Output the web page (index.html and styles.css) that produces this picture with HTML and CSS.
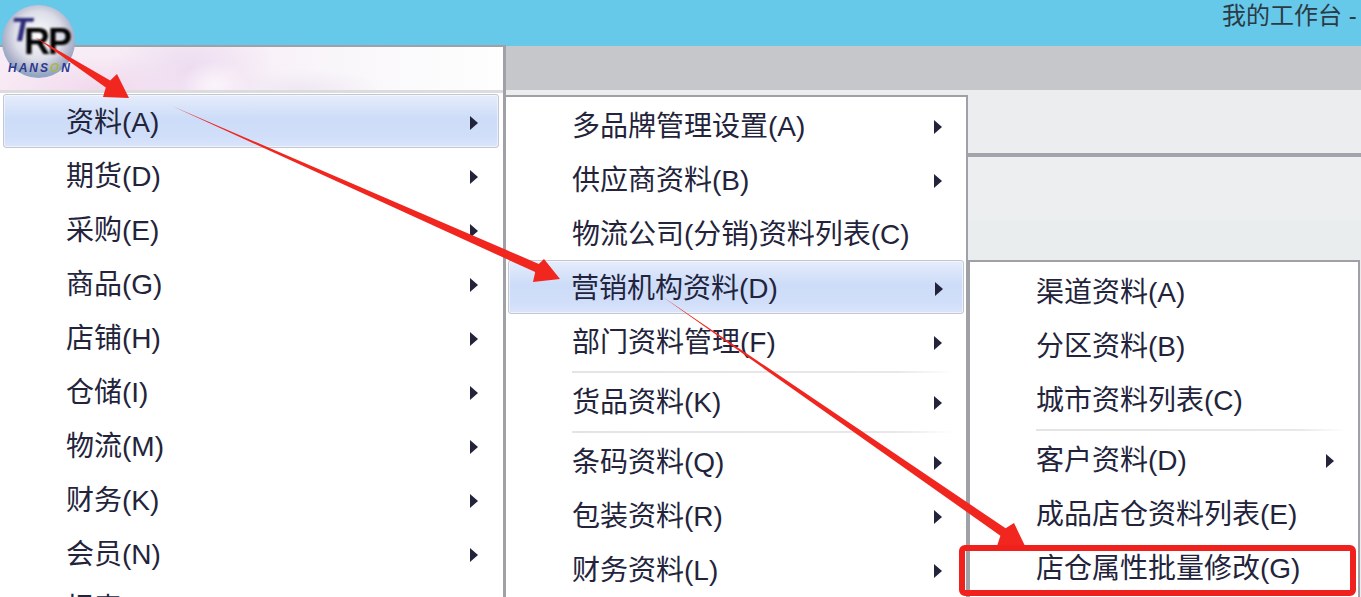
FILE: index.html
```html
<!DOCTYPE html>
<html lang="zh-CN">
<head>
    <meta charset="UTF-8">
    <meta name="viewport" content="width=device-width, initial-scale=1.0">
    <title>我的工作台</title>
    <link rel="stylesheet" href="styles.css">
</head>
<body>
    <div class="window">
        <div class="titlebar">
            <span class="title-text">我的工作台 -</span>
        </div>
        <div class="tabstrip"></div>
        <div class="ribbon"></div>
        <div class="ribbon-line"></div>
        <div class="workarea">
            <div class="workarea-top"></div>
            <div class="workarea-band"></div>
        </div>
    </div>

    <!-- main menu -->
    <div class="menu menu-main">
        <div class="menu-banner"></div>
        <div class="menu-item active"><span>资料(A)</span><i class="arrow"></i></div>
        <div class="menu-item"><span>期货(D)</span><i class="arrow"></i></div>
        <div class="menu-item"><span>采购(E)</span><i class="arrow"></i></div>
        <div class="menu-item"><span>商品(G)</span><i class="arrow"></i></div>
        <div class="menu-item"><span>店铺(H)</span><i class="arrow"></i></div>
        <div class="menu-item"><span>仓储(I)</span><i class="arrow"></i></div>
        <div class="menu-item"><span>物流(M)</span><i class="arrow"></i></div>
        <div class="menu-item"><span>财务(K)</span><i class="arrow"></i></div>
        <div class="menu-item"><span>会员(N)</span><i class="arrow"></i></div>
        <div class="menu-item"><span>报表(S)</span><i class="arrow"></i></div>
    </div>

    <!-- second level -->
    <div class="menu menu-sub menu-data">
        <div class="menu-item"><span>多品牌管理设置(A)</span><i class="arrow"></i></div>
        <div class="menu-item"><span>供应商资料(B)</span><i class="arrow"></i></div>
        <div class="menu-item"><span>物流公司(分销)资料列表(C)</span></div>
        <div class="menu-item active"><span>营销机构资料(D)</span><i class="arrow"></i></div>
        <div class="menu-item"><span>部门资料管理(F)</span><i class="arrow"></i></div>
        <div class="menu-sep"></div>
        <div class="menu-item"><span>货品资料(K)</span><i class="arrow"></i></div>
        <div class="menu-sep"></div>
        <div class="menu-item"><span>条码资料(Q)</span><i class="arrow"></i></div>
        <div class="menu-item"><span>包装资料(R)</span><i class="arrow"></i></div>
        <div class="menu-item"><span>财务资料(L)</span><i class="arrow"></i></div>
    </div>

    <!-- third level -->
    <div class="menu menu-sub menu-org">
        <div class="menu-item"><span>渠道资料(A)</span></div>
        <div class="menu-item"><span>分区资料(B)</span></div>
        <div class="menu-item"><span>城市资料列表(C)</span></div>
        <div class="menu-sep"></div>
        <div class="menu-item"><span>客户资料(D)</span><i class="arrow"></i></div>
        <div class="menu-item"><span>成品店仓资料列表(E)</span></div>
        <div class="menu-item"><span>店仓属性批量修改(G)</span></div>
    </div>

    <!-- round app button -->
    <svg class="logo" width="78" height="80" viewBox="0 0 78 80">
        <defs>
            <radialGradient id="orb" cx="50%" cy="42%" r="55%">
                <stop offset="0" stop-color="#ffffff"/>
                <stop offset="0.6" stop-color="#dcdde8"/>
                <stop offset="0.88" stop-color="#adb1c8"/>
                <stop offset="1" stop-color="#8fa6c4"/>
            </radialGradient>
            <filter id="soft"><feGaussianBlur stdDeviation="0.8"/></filter>
        </defs>
        <circle cx="38.5" cy="41.5" r="36.5" fill="url(#orb)"/>
        <text class="logo-t" x="11" y="41" filter="url(#soft)">T</text>
        <text class="logo-rp" x="24" y="54" filter="url(#soft)">RP</text>
        <text class="logo-name" x="8" y="72">HANS<tspan fill="#a9b84a">O</tspan>N</text>
    </svg>

    <!-- red markup drawn on top of the screenshot -->
    <svg class="markup" width="1361" height="597" viewBox="0 0 1361 597">
        <polygon points="35,37 110.2,80.6 117,74 129,98 103,97 105.8,87.4"/>
        <polygon points="172,106 538.8,263.9 544,259 560,279 533,282 535.2,272.1"/>
        <polygon points="660,295 1005.6,528.3 1014,523 1026,548 997,546 1000.4,535.7"/>
    </svg>
    <div class="highlight-box"></div>
</body>
</html>
```

FILE: styles.css
```css
* {
    margin: 0;
    padding: 0;
    box-sizing: border-box;
}

html, body {
    width: 1361px;
    height: 597px;
    overflow: hidden;
}

body {
    position: relative;
    background-color: #edeeef;
    font-family: "Liberation Sans", "Noto Sans CJK SC", sans-serif;
    color: #23243c;
}

/* Window behind the menus */
.window {
    display: flex;
    flex-direction: column;
    height: 597px;
}

.titlebar {
    height: 46px;
    flex-shrink: 0;
    background-color: #66c9ea;
    padding-left: 1222px;
    white-space: nowrap;
    overflow: hidden;
}

.title-text {
    font-size: 24px;
    line-height: 32px;
    color: #2b3a44;
}

.tabstrip {
    height: 44px;
    flex-shrink: 0;
    background-color: #c6c7cb;
}

.ribbon {
    height: 63px;
    flex-shrink: 0;
    background-color: #ebedee;
}

.ribbon-line {
    height: 4px;
    flex-shrink: 0;
    background-color: #a3a4ab;
}

.workarea {
    flex: 1;
    display: flex;
    flex-direction: column;
}

.workarea-top {
    height: 63px;
    background-color: #edeeef;
}

.workarea-band {
    flex: 1;
    background-color: #e9edee;
}

/* Menus */
.menu {
    position: absolute;
    overflow: hidden;
    background-color: #fff;
    border: 3px solid #a0a1a6;
    font-size: 28px;
    white-space: nowrap;
}

.menu-main {
    left: 0;
    top: 45px;
    width: 506px;
    height: 552px;
    border-width: 2px 3px 0 0;
}

.menu-banner {
    height: 46px;
    margin-bottom: 1px;
    border-bottom: 3px solid #dcdcde;
    background:
        radial-gradient(ellipse 34px 24px at 215px 38px, #fbf4fb 0%, rgba(251, 244, 251, 0) 100%),
        radial-gradient(ellipse 85px 55px at 190px 22px, #eddcf0 0%, rgba(237, 220, 240, 0) 100%),
        radial-gradient(ellipse 110px 34px at 100px 42px, #f1d8ec 0%, rgba(241, 216, 236, 0) 100%),
        radial-gradient(ellipse 80px 20px at 300px 42px, #efe8f3 0%, rgba(239, 232, 243, 0) 100%),
        linear-gradient(90deg, #f8ebf5 0%, #f8f0f8 50%, #f9f7fa 70%, #fefefe 100%);
}

.menu-sub {
    border-width: 2px 2px 0 3px;
}

.menu-data {
    left: 503px;
    top: 95px;
    width: 465px;
    height: 502px;
    padding-top: 1px;
}

.menu-org {
    left: 967px;
    top: 260px;
    width: 393px;
    height: 337px;
    padding-top: 2px;
}

.menu-item {
    display: flex;
    align-items: center;
    justify-content: space-between;
    height: 54px;
    padding: 0 23px 0 65px;
    border: 1px solid transparent;
    border-radius: 3px;
}

.menu-main .menu-item {
    padding-right: 24px;
}

.menu-item span {
    margin-top: -2px;
    color: #23243c;
}

.menu-item.active {
    border-color: #c3c7d0;
    margin-left: 3px;
    margin-right: 4px;
    padding-left: 62px;
    padding-right: 20px;
    box-shadow: inset 0 0 0 1px rgba(255, 255, 255, 0.5);
    background: linear-gradient(to bottom, #e6edfc 0%, #cddcf8 45%, #d0def9 80%, #dbe5fb 100%);
}

.menu-sub .menu-item.active {
    margin-left: 2px;
    margin-right: 2px;
    padding-left: 62px;
    padding-right: 20px;
}

.arrow {
    display: block;
    width: 0;
    height: 0;
    margin-top: 4px;
    border-style: solid;
    border-width: 7px 0 7px 8px;
    border-color: transparent transparent transparent #23243c;
}

.menu-sep {
    height: 6px;
    margin: 0 12px 0 66px;
    background: linear-gradient(90deg, #e4e4e6, #e8e8ea 85%, #fff) 0 3px / 100% 2px no-repeat;
}

/* Logo button */
.logo {
    position: absolute;
    left: 0;
    top: 0;
}

.logo-t {
    font-family: "Liberation Sans", sans-serif;
    font-size: 34px;
    font-weight: bold;
    font-style: italic;
    fill: #2b2a78;
}

.logo-rp {
    font-family: "Liberation Sans", sans-serif;
    font-size: 36px;
    font-weight: bold;
    fill: #050505;
    letter-spacing: -2px;
}

.logo-name {
    font-family: "Liberation Sans", sans-serif;
    font-size: 12px;
    font-weight: bold;
    font-style: italic;
    fill: #2b3a90;
    letter-spacing: 2px;
}

/* Red annotations */
.markup {
    position: absolute;
    left: 0;
    top: 0;
    fill: #f0261f;
}

.highlight-box {
    position: absolute;
    left: 959px;
    top: 545px;
    width: 397px;
    height: 51px;
    border: 6px solid #f0201c;
    border-radius: 6px;
}
```
